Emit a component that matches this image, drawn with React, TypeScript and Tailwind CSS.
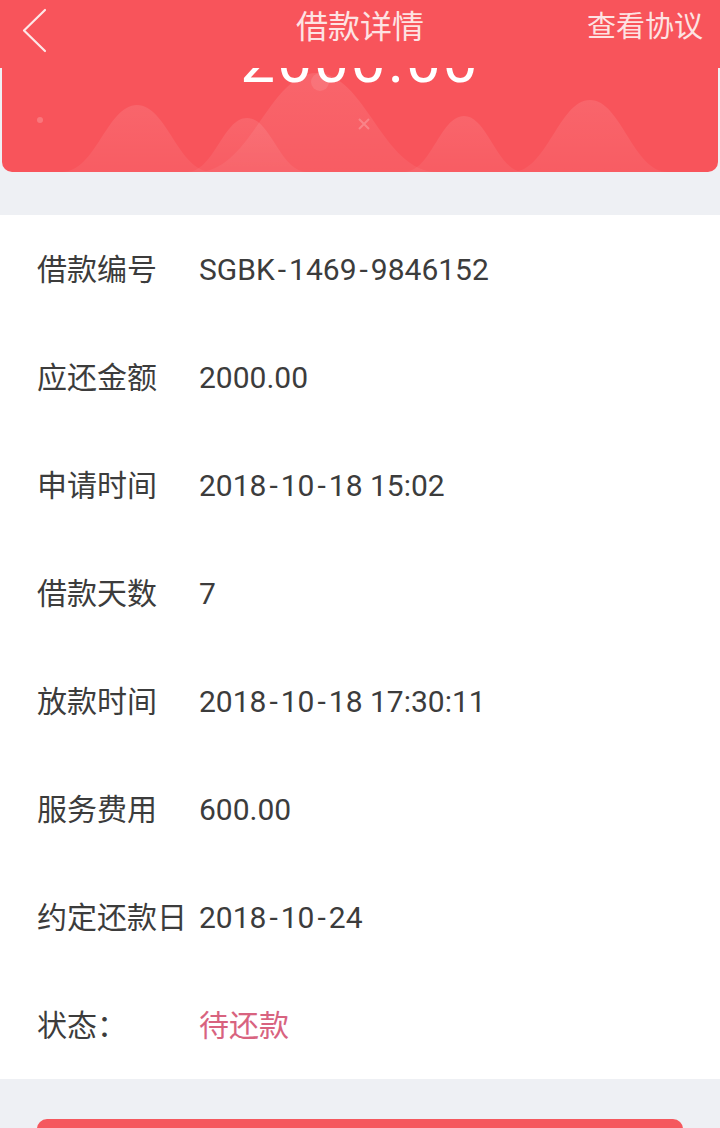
import { ReactNode } from 'react';

function Num({ text }: { text: string }) {
    const parts = text.split('-');
    return (
        <>
            {parts.map((p, i) => (
                <span key={i}>
                    {i > 0 && <span className="px-[3px]">-</span>}
                    {p}
                </span>
            ))}
        </>
    );
}

const rows: { label: string; value: ReactNode }[] = [
    { label: '借款编号', value: <Num text="SGBK-1469-9846152" /> },
    { label: '应还金额', value: '2000.00' },
    { label: '申请时间', value: <Num text="2018-10-18 15:02" /> },
    { label: '借款天数', value: '7' },
    { label: '放款时间', value: <Num text="2018-10-18 17:30:11" /> },
    { label: '服务费用', value: '600.00' },
    { label: '约定还款日', value: <Num text="2018-10-24" /> },
    { label: '状态：', value: <span className="text-[#d8637f]">待还款</span> },
];

// soft hills behind the amount (y measured from the card's top at page y 68)
const hills = [
    { cx: 135, top: 37, hw: 75 },
    { cx: 245, top: 50, hw: 60 },
    { cx: 315, top: 5, hw: 120 },
    { cx: 462, top: 48, hw: 60 },
    { cx: 588, top: 32, hw: 78 },
];

function Hills() {
    return (
        <svg className="absolute inset-0" width="716" height="104" viewBox="0 0 716 104">
            <defs>
                <linearGradient id="hill" x1="0" y1="0" x2="0" y2="1">
                    <stop offset="0" stopColor="#fff" stopOpacity="0.1" />
                    <stop offset="1" stopColor="#fff" stopOpacity="0.05" />
                </linearGradient>
            </defs>
            {hills.map((h) => (
                <path
                    key={h.cx}
                    d={`M${h.cx - h.hw} 104 C${h.cx - h.hw * 0.55} 104 ${h.cx - h.hw * 0.4} ${h.top} ${h.cx} ${h.top} C${h.cx + h.hw * 0.4} ${h.top} ${h.cx + h.hw * 0.55} 104 ${h.cx + h.hw} 104 Z`}
                    fill="url(#hill)"
                />
            ))}
            <circle cx="38" cy="52" r="3" fill="#fff" fillOpacity="0.2" />
            <circle cx="318" cy="14" r="9" fill="#fff" fillOpacity="0.1" />
            <path d="M357 51 L367 61 M367 51 L357 61" stroke="#fff" strokeOpacity="0.22" strokeWidth="2" />
        </svg>
    );
}

export default function App() {
    return (
        <div
            className="w-[720px] h-[1128px] overflow-hidden bg-[#eef0f4]"
            style={{ fontFamily: 'Roboto, "Noto Sans CJK SC", sans-serif' }}
        >
            <header className="relative h-[68px] bg-[#f8545b] flex items-center justify-between">
                <button className="w-[70px] h-full flex items-center pl-[22px] -mt-[6px]">
                    <svg width="26" height="48" viewBox="0 0 26 48" fill="none">
                        <path d="M23 3 L2 23.5 L23 44" stroke="#fde8e8" strokeWidth="2.2" strokeLinecap="round" strokeLinejoin="round" />
                    </svg>
                </button>
                <h1 className="absolute left-1/2 -translate-x-1/2 top-[7px] text-[32px] leading-[40px] text-[#fde3e3]">借款详情</h1>
                <span className="pr-[17px] -mt-[12px] text-[29px] text-[#fde3e3]">查看协议</span>
            </header>

            <section className="relative mx-[2px] h-[104px] rounded-b-[10px] bg-[#f8545b] overflow-hidden">
                <Hills />
                <div className="relative -mt-[38px] text-center text-[62px] leading-none text-white tracking-[2px]">
                    2000.00
                </div>
            </section>

            <ul className="mt-[43px] bg-white">
                {rows.map((r) => (
                    <li key={r.label} className="h-[108px] flex items-center pl-[37px] text-[30px] text-[#3c3c3c]">
                        <span className="w-[162px] shrink-0 whitespace-nowrap">{r.label}</span>
                        <span className="whitespace-nowrap">{r.value}</span>
                    </li>
                ))}
            </ul>

            <div className="pt-[40px] px-[37px]">
                <button className="w-full h-[90px] rounded-[10px] bg-[#f5585e] text-white text-[32px]">立即还款</button>
            </div>
        </div>
    );
}
